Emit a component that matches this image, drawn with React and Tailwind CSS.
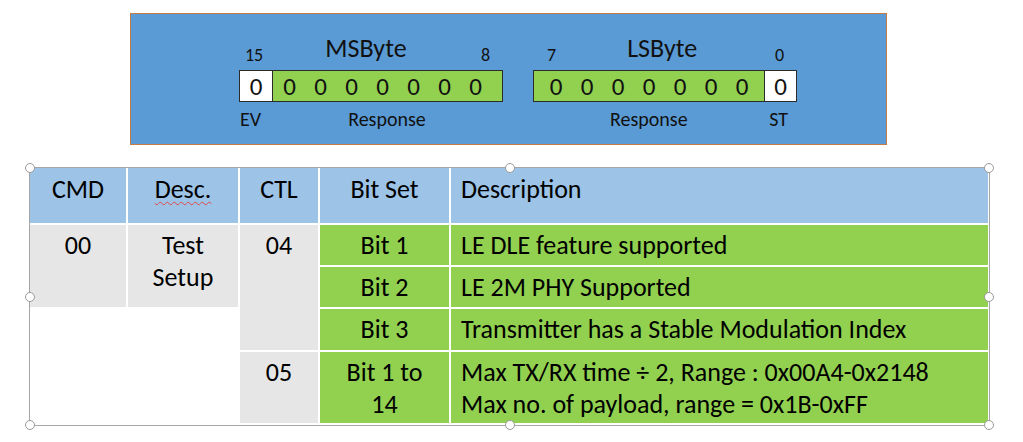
import React from 'react';

const font = { fontFamily: 'Carlito, Lato, "Open Sans", sans-serif' };

const Handle = ({ className }) => (
  <span
    className={`absolute w-[10px] h-[10px] rounded-full bg-white border-[1.5px] border-[#9a9a9a] -translate-x-1/2 -translate-y-1/2 ${className}`}
  />
);

const Digits = ({ count, className }) => (
  <div className={`flex h-full bg-[#92d050] ${className}`}>
    {Array.from({ length: count }).map((_, i) => (
      <span key={i} className="w-[31px] flex items-center justify-center">0</span>
    ))}
  </div>
);

const ByteGroup = ({ side }) => {
  const ms = side === 'ms';
  return (
    <div className="flex flex-col w-[264px] text-[#111]">
      {/* top labels */}
      <div className="flex items-end h-[20px]">
        {ms ? (
          <>
            <span className="ml-[6px] text-[18px] leading-none mb-[-3px]">15</span>
            <span className="ml-[62px] text-[26px] leading-none">MSByte</span>
            <span className="ml-auto mr-[13px] text-[18px] leading-none mb-[-3px]">8</span>
          </>
        ) : (
          <>
            <span className="ml-[14px] text-[18px] leading-none mb-[-3px]">7</span>
            <span className="ml-[71px] text-[26px] leading-none">LSByte</span>
            <span className="ml-auto mr-[13px] text-[18px] leading-none mb-[-3px]">0</span>
          </>
        )}
      </div>
      {/* bits */}
      <div className="mt-[9px] h-[32px] flex border border-[#2b2b2b] text-[25px] leading-none">
        {ms ? (
          <>
            <span className="w-[33px] bg-white flex items-center justify-center border-r border-[#2b2b2b]">0</span>
            <Digits count={7} className="flex-1 pl-[1px]" />
          </>
        ) : (
          <>
            <Digits count={7} className="flex-1 justify-center" />
            <span className="w-[32px] bg-white flex items-center justify-center border-l border-[#2b2b2b]">0</span>
          </>
        )}
      </div>
      {/* bottom labels */}
      <div className="flex mt-[7px] text-[20px] leading-none">
        {ms ? (
          <>
            <span className="ml-[1px]">EV</span>
            <span className="ml-[87px]">Response</span>
          </>
        ) : (
          <>
            <span className="ml-[77px]">Response</span>
            <span className="ml-auto mr-[9px]">ST</span>
          </>
        )}
      </div>
    </div>
  );
};

const gray = 'bg-[#e7e6e6]';
const green = 'bg-[#92d050]';
const head = 'bg-[#9dc3e6]';

const rows = [
  { bit: 'Bit 1', desc: ['LE DLE feature supported'] },
  { bit: 'Bit 2', desc: ['LE 2M PHY Supported'] },
  { bit: 'Bit 3', desc: ['Transmitter has a Stable Modulation Index'] },
  { bit: ['Bit 1 to', '14'], desc: ['Max TX/RX time ÷ 2, Range : 0x00A4-0x2148', 'Max no. of payload, range = 0x1B-0xFF'] },
];

export default function App() {
  return (
    <div className="w-[1023px] h-[442px] bg-white overflow-hidden" style={font}>
      {/* bit layout panel */}
      <div className="ml-[130px] mt-[13px] w-[757px] h-[132px] bg-[#5b9bd5] border border-[#c47b45] flex pt-[27px] pl-[108px] gap-[30px]">
        <ByteGroup side="ms" />
        <ByteGroup side="ls" />
      </div>

      {/* command table */}
      <div className="relative ml-[29px] mt-[22px] w-[961px] h-[259px] border border-[#a6a6a6]">
        <div className="grid grid-cols-[96px_110px_78px_129px_537px] grid-rows-[55px_40px_40px_41px_71px] gap-[2px] text-[26px] leading-[32px] text-black">
          <div className={`${head} text-center pt-[5px]`}>CMD</div>
          <div className={`${head} text-center pt-[5px]`}>
            <span className="underline decoration-wavy decoration-[#e04848] decoration-[1px] underline-offset-[3px]">Desc.</span>
          </div>
          <div className={`${head} text-center pt-[5px]`}>CTL</div>
          <div className={`${head} text-center pt-[5px]`}>Bit Set</div>
          <div className={`${head} pl-[10px] pt-[5px]`}>Description</div>

          <div className={`${gray} row-span-2 text-center pt-[4px]`}>00</div>
          <div className={`${gray} row-span-2 text-center pt-[4px]`}>Test<br />Setup</div>
          <div className={`${gray} row-span-3 text-center pt-[4px] col-start-3 row-start-2`}>04</div>

          {rows.map((r, i) => (
            <React.Fragment key={i}>
              {i === 3 && <div className={`${gray} col-start-3 row-start-5 text-center pt-[4px]`}>05</div>}
              <div className={`${green} col-start-4 text-center pt-[4px]`} style={{ gridRowStart: i + 2 }}>
                {Array.isArray(r.bit) ? r.bit.map((b) => <div key={b}>{b}</div>) : r.bit}
              </div>
              <div className={`${green} col-start-5 pl-[10px] pt-[4px] whitespace-nowrap`} style={{ gridRowStart: i + 2 }}>
                {r.desc.map((d) => <div key={d}>{d}</div>)}
              </div>
            </React.Fragment>
          ))}
        </div>

        <Handle className="left-[0px] top-[0px]" />
        <Handle className="left-1/2 top-[0px]" />
        <Handle className="left-full top-[0px]" />
        <Handle className="left-[0px] top-1/2" />
        <Handle className="left-full top-1/2" />
        <Handle className="left-[0px] top-full" />
        <Handle className="left-1/2 top-full" />
        <Handle className="left-full top-full" />
      </div>
    </div>
  );
}
